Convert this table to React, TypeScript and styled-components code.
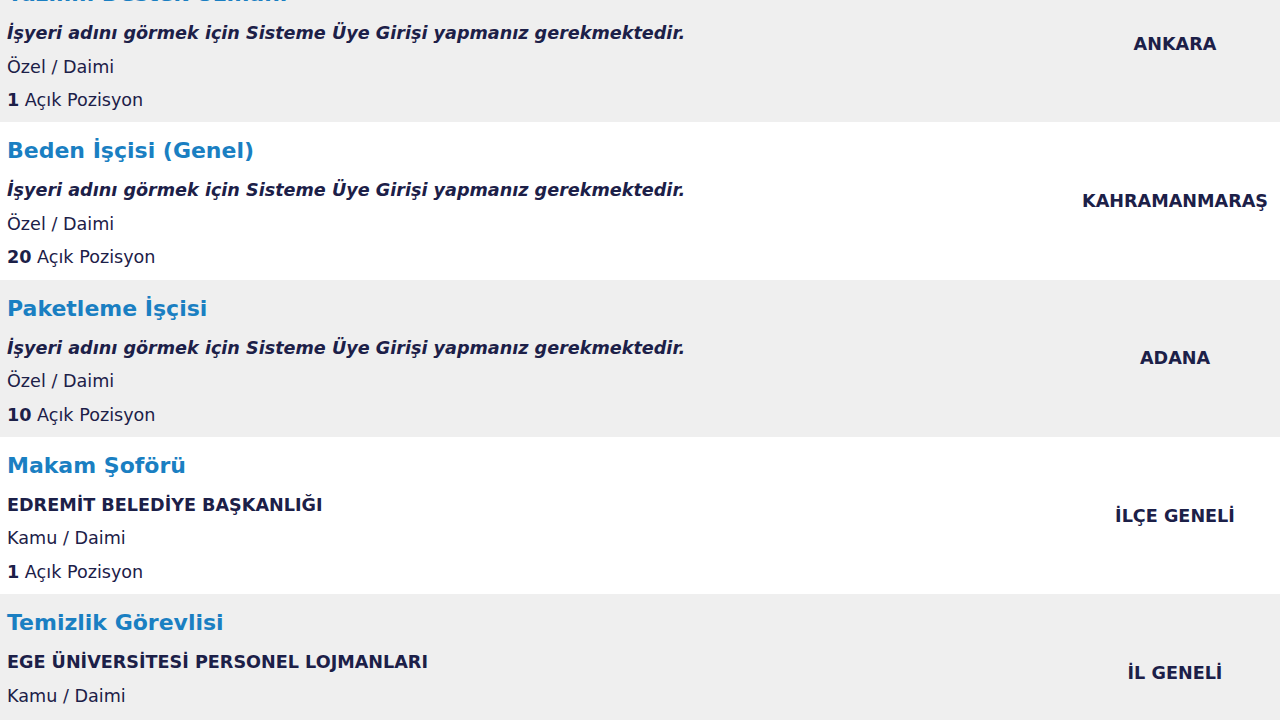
import styled, { createGlobalStyle } from 'styled-components';

interface Job {
  title: string;
  employer: string;
  hidden: boolean;
  kind: string;
  count: number;
  city: string;
}

const jobs: Job[] = [
  { title: 'Yazılım Destek Uzmanı', employer: 'İşyeri adını görmek için Sisteme Üye Girişi yapmanız gerekmektedir.', hidden: true, kind: 'Özel / Daimi', count: 1, city: 'ANKARA' },
  { title: 'Beden İşçisi (Genel)', employer: 'İşyeri adını görmek için Sisteme Üye Girişi yapmanız gerekmektedir.', hidden: true, kind: 'Özel / Daimi', count: 20, city: 'KAHRAMANMARAŞ' },
  { title: 'Paketleme İşçisi', employer: 'İşyeri adını görmek için Sisteme Üye Girişi yapmanız gerekmektedir.', hidden: true, kind: 'Özel / Daimi', count: 10, city: 'ADANA' },
  { title: 'Makam Şoförü', employer: 'EDREMİT BELEDİYE BAŞKANLIĞI', hidden: false, kind: 'Kamu / Daimi', count: 1, city: 'İLÇE GENELİ' },
  { title: 'Temizlik Görevlisi', employer: 'EGE ÜNİVERSİTESİ PERSONEL LOJMANLARI', hidden: false, kind: 'Kamu / Daimi', count: 1, city: 'İL GENELİ' },
];

const GlobalStyle = createGlobalStyle`
  html, body {
    margin: 0;
    padding: 0;
    background: #ffffff;
    overflow: hidden;
  }
  body {
    font-family: 'DejaVu Sans', Verdana, sans-serif;
    color: #1c2048;
  }
`;

// the list is scrolled: the first row starts above the window
const List = styled.div`
  margin-top: -35px;
  display: flex;
  flex-direction: column;
`;

const Row = styled.div<{ $alt: boolean }>`
  display: flex;
  align-items: center;
  height: 157.33px;
  flex-shrink: 0;
  box-sizing: border-box;
  padding-left: 7px;
  background: ${(p) => (p.$alt ? '#efefef' : '#ffffff')};
`;

const Info = styled.div`
  flex: 1;
  align-self: flex-start;
  padding-top: 14px;
  display: flex;
  flex-direction: column;
`;

const Title = styled.a`
  font-size: 22px;
  font-weight: bold;
  color: #1a7fc2;
  text-decoration: none;
  line-height: 30px;
  margin-bottom: 8px;
`;

const Employer = styled.div<{ $hidden: boolean }>`
  font-size: 17.6px;
  font-weight: bold;
  font-style: ${(p) => (p.$hidden ? 'italic' : 'normal')};
  line-height: 33.5px;
  white-space: nowrap;
`;

const Line = styled.div`
  font-size: 17.6px;
  line-height: 33.5px;
`;

const Count = styled.b`
  font-weight: bold;
`;

const City = styled.div`
  width: 210px;
  text-align: center;
  font-size: 17.6px;
  font-weight: bold;
`;

export default function App() {
  return (
    <>
      <GlobalStyle />
      <List>
        {jobs.map((job, i) => (
          <Row key={job.title} $alt={i % 2 === 0}>
            <Info>
              <Title href="#">{job.title}</Title>
              <Employer $hidden={job.hidden}>{job.employer}</Employer>
              <Line>{job.kind}</Line>
              <Line>
                <Count>{job.count}</Count> Açık Pozisyon
              </Line>
            </Info>
            <City>{job.city}</City>
          </Row>
        ))}
      </List>
    </>
  );
}
